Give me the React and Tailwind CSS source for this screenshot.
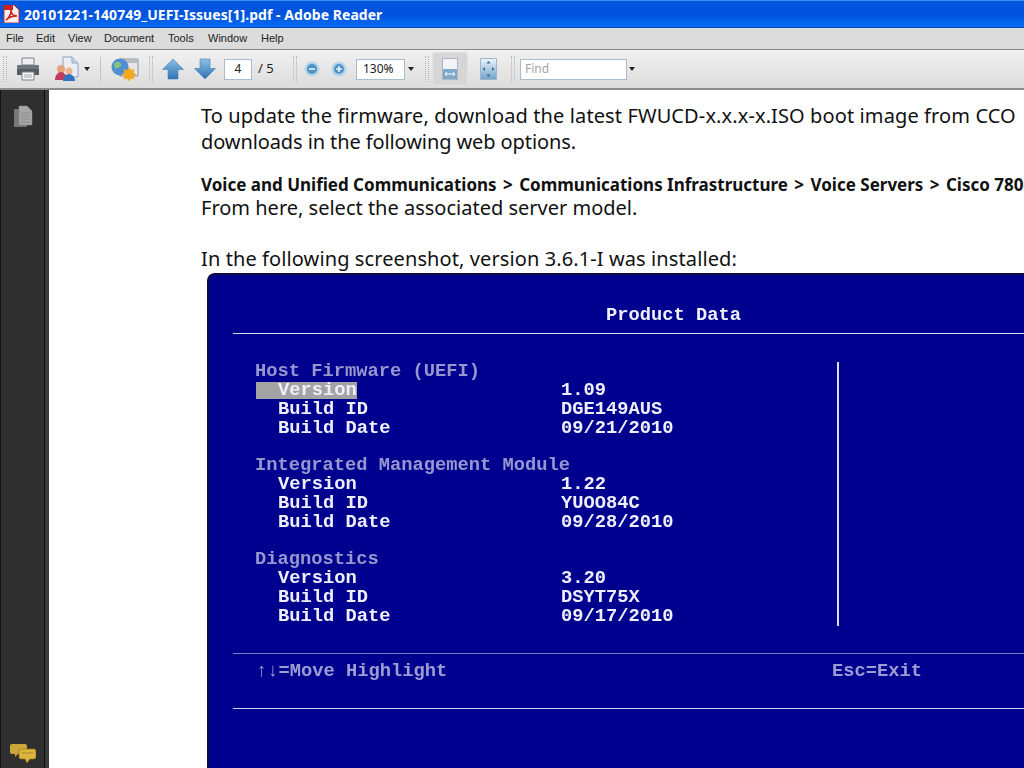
const MENU = [
  ["File", "w-[30px]"],
  ["Edit", "w-[32px]"],
  ["View", "w-[36px]"],
  ["Document", "w-[64px]"],
  ["Tools", "w-[40px]"],
  ["Window", "w-[53px]"],
  ["Help", "w-[30px]"],
];

const SECTIONS = [
  {
    title: "Host Firmware (UEFI)",
    rows: [
      ["Version", "1.09", true],
      ["Build ID", "DGE149AUS"],
      ["Build Date", "09/21/2010"],
    ],
  },
  {
    title: "Integrated Management Module",
    rows: [
      ["Version", "1.22"],
      ["Build ID", "YUOO84C"],
      ["Build Date", "09/28/2010"],
    ],
  },
  {
    title: "Diagnostics",
    rows: [
      ["Version", "3.20"],
      ["Build ID", "DSYT75X"],
      ["Build Date", "09/17/2010"],
    ],
  },
];

function Grip({ className = "" }) {
  return <div className={`w-[4px] h-[26px] border-x border-dotted border-[#b4b4b4] ${className}`}></div>;
}

function Caret({ className = "" }) {
  return (
    <svg className={className} width="6" height="4" viewBox="0 0 6 4">
      <path d="M0 0h6L3 4z" fill="#222" />
    </svg>
  );
}

function PdfIcon() {
  return (
    <svg width="17" height="18" viewBox="0 0 17 18" className="shrink-0">
      <path d="M1 0h10l5 5v13H1z" fill="#f6eeee" stroke="#c9302c" />
      <path d="M1 0h9v5H1z" fill="#c8231f" />
      <path d="M3 15c3-2 5-6 5-10 0 4 2 6 6 6-4 0-8 1-11 4z" fill="none" stroke="#d0201c" strokeWidth="1.6" />
    </svg>
  );
}

function PrinterIcon() {
  return (
    <svg width="24" height="24" viewBox="0 0 24 24">
      <path d="M6 1h12v7H6z" fill="#eef0f2" stroke="#7c8288" />
      <path d="M2 8h20a1 1 0 0 1 1 1v9H1V9a1 1 0 0 1 1-1z" fill="#6f767c" />
      <path d="M1 12h22v6H1z" fill="#555b61" />
      <path d="M6 15h12v8H6z" fill="#f4f5f6" stroke="#7c8288" />
      <path d="M8 18h8M8 20h8" stroke="#a5aaae" />
    </svg>
  );
}

function SharedDocIcon() {
  return (
    <svg width="24" height="26" viewBox="0 0 24 26">
      <path d="M8 1h9l6 6v14H8z" fill="#e9eef4" stroke="#8ea3bb" />
      <path d="M17 1v6h6" fill="#c7d6e6" stroke="#8ea3bb" />
      <circle cx="6" cy="13" r="4" fill="#e8a37a" />
      <path d="M0 24c0-5 3-8 6-8s6 3 6 8z" fill="#c23a5c" />
      <circle cx="14" cy="15" r="3.6" fill="#eeb48a" />
      <path d="M8 25c0-4 3-7 6-7s6 3 6 7z" fill="#2f74c0" />
    </svg>
  );
}

function GlobeIcon() {
  return (
    <svg width="28" height="27" viewBox="0 0 28 27">
      <path d="M9 3h18v17H9z" fill="#e6e7e8" stroke="#8e9296" />
      <path d="M9 3h18v4H9z" fill="#b9bcc0" />
      <circle cx="9" cy="11" r="8.5" fill="#4f8fd2" />
      <path d="M3 8c3-3 6-2 7 0s-2 4-4 4-3 2-1 4" fill="#8cc47d" />
      <path d="M18 11l2 3 3.500-1-1 3.500 3 2-3 1.500 1 3.500-3.500-1-2 3-2-3-3.500 1 1-3.500-3-1.500 3-2-1-3.500 3.500 1z" fill="#f2a91c" />
    </svg>
  );
}

function ArrowIcon({ down = false }) {
  return (
    <svg width="22" height="22" viewBox="0 0 22 22" className={down ? "rotate-180" : ""}>
      <defs>
        <linearGradient id={down ? "arrowD" : "arrowU"} x1="0" y1={down ? "1" : "0"} x2="0" y2={down ? "0" : "1"}>
          <stop offset="0" stopColor="#8cc0e8" />
          <stop offset="1" stopColor="#2f74b4" />
        </linearGradient>
      </defs>
      <path d="M11 1l10.500 10.500H16V21H6v-9.500H.5z" fill={`url(#${down ? "arrowD" : "arrowU"})`} stroke="#3f7fb5" strokeWidth=".6" />
    </svg>
  );
}

function ZoomIcon({ plus = false }) {
  return (
    <svg width="16" height="16" viewBox="0 0 16 16">
      <circle cx="8" cy="8" r="7.500" fill="#b6d3e8" />
      <circle cx="8" cy="8" r="5" fill="#4d93c8" />
      <path d={plus ? "M5 8h6M8 5v6" : "M5 8h6"} stroke="#eaf3fa" strokeWidth="1.600" />
    </svg>
  );
}

function FitWidthIcon() {
  return (
    <svg width="16" height="22" viewBox="0 0 16 22">
      <path d="M.5.5h15v21H.5z" fill="#f2f4f6" stroke="#a9b7c5" />
      <path d="M1 11h14v10H1z" fill="#7fa9cc" />
      <path d="M3 16h10M3 16l2-2M3 16l2 2M13 16l-2-2M13 16l-2 2" stroke="#fff" fill="none" />
    </svg>
  );
}

function FitPageIcon() {
  return (
    <svg width="17" height="22" viewBox="0 0 17 22">
      <defs>
        <linearGradient id="fitPage" x1="0" y1="0" x2="0" y2="1">
          <stop offset="0" stopColor="#eef5fa" />
          <stop offset="1" stopColor="#6fa3cb" />
        </linearGradient>
      </defs>
      <path d="M.5.5h16v21H.5z" fill="url(#fitPage)" stroke="#9fb5c8" />
      <path d="M8.500 3l2 2.500h-4zM8.500 19l2-2.500h-4zM2.500 11l2.500-2v4zM14.500 11l-2.500-2v4z" fill="#2f6f9f" />
    </svg>
  );
}

function PagesIcon() {
  return (
    <svg width="20" height="23" viewBox="0 0 20 23">
      <path d="M1 4h13v18H1z" fill="#777" />
      <path d="M6 1h8l5 5v14H6z" fill="#a6a6a6" stroke="#8a8a8a" strokeWidth=".5" />
      <path d="M8 8h9M8 11h9M8 14h9M8 17h9" stroke="#8c8c8c" />
    </svg>
  );
}

function CommentsIcon() {
  return (
    <svg width="26" height="20" viewBox="0 0 26 20">
      <path d="M2 1h13a2 2 0 0 1 2 2v6a2 2 0 0 1-2 2H8l-3 3v-3H2a2 2 0 0 1-2-2V3a2 2 0 0 1 2-2z" fill="#c9a53a" />
      <path d="M11 6h13a2 2 0 0 1 2 2v6a2 2 0 0 1-2 2h-4l-3 4-2-4h-4a2 2 0 0 1-2-2V8a2 2 0 0 1 2-2z" fill="#dcb43c" stroke="#8f7420" strokeWidth=".6" />
      <path d="M12 10h11" stroke="#a98a2a" />
    </svg>
  );
}

function Field({ className = "", children }) {
  return (
    <div className={`h-[21px] border border-[#a9bccd] bg-white flex items-center text-[12px] shrink-0 ${className}`}>
      {children}
    </div>
  );
}

function Toolbar() {
  return (
    <div className="h-[38px] bg-gradient-to-b from-[#f1f1f1] to-[#dcdcdc] flex items-center whitespace-nowrap text-[#222]">
      <Grip className="ml-[3px]" />
      <div className="ml-[9px] flex"><PrinterIcon /></div>
      <div className="ml-[15px] flex"><SharedDocIcon /></div>
      <Caret className="ml-[5px]" />
      <div className="ml-[10px] w-px h-[24px] bg-[#c4c4c4]"></div>
      <div className="ml-[10px] flex"><GlobeIcon /></div>
      <Grip className="ml-[10px]" />
      <div className="ml-[9px] flex"><ArrowIcon /></div>
      <div className="ml-[10px] flex"><ArrowIcon down /></div>
      <Field className="ml-[8px] w-[28px] justify-center">4</Field>
      <span className="ml-[6px] w-[20px] text-[13px]">/ 5</span>
      <Grip className="ml-[15px]" />
      <div className="ml-[7px] flex"><ZoomIcon /></div>
      <div className="ml-[11px] flex"><ZoomIcon plus /></div>
      <Field className="ml-[9px] w-[49px] pl-[6px]">130%</Field>
      <Caret className="ml-[3px]" />
      <Grip className="ml-[11px]" />
      <div className="ml-[3px] w-[36px] h-[34px] rounded-[3px] bg-[#d6d6d6] border border-[#e2e2e2] flex items-center justify-center">
        <FitWidthIcon />
      </div>
      <div className="ml-[12px] flex"><FitPageIcon /></div>
      <Grip className="ml-[14px]" />
      <Field className="ml-[5px] w-[107px] pl-[4px] text-[#a5a5a5]">Find</Field>
      <Caret className="ml-[2px]" />
    </div>
  );
}

function Rule({ className = "" }) {
  return <div className={`h-px ml-[24px] ${className}`}></div>;
}

function BiosRow({ row }) {
  const [label, value, active] = row;
  return (
    <div className="h-[18.8px] grid grid-cols-[352px_1fr] items-center">
      <div className="pl-[47px]">
        <span className={`inline-block w-[101px] pl-[22px] ${active ? "bg-[#a3a3a3]" : ""}`}>{label}</span>
      </div>
      <div>{value}</div>
    </div>
  );
}

function BiosScreen() {
  return (
    <div className="ml-[158px] mt-[1px] flex-1 overflow-hidden border-l-2 border-t-2 border-[#0b0b40] rounded-tl-[8px] bg-[#00008f] font-['Liberation_Mono',monospace] font-bold text-[18.750px] leading-[17px] text-[#eeeefc] whitespace-nowrap blur-[0.4px]">
      <div className="mt-[31px] ml-[397px] h-[19px] leading-[19px]">Product Data</div>
      <Rule className="mt-[8px] bg-[#d8d8f2]" />
      <div className="mt-[28.400px] flex">
        <div className="w-[628px] shrink-0">
          {SECTIONS.map((section) => (
            <div key={section.title} className="mb-[18.8px] last:mb-0">
              <div className="h-[18.8px] pl-[46px] text-[#9797cf] flex items-center">{section.title}</div>
              {section.rows.map((row) => (
                <BiosRow key={row[0]} row={row} />
              ))}
            </div>
          ))}
        </div>
        <div className="w-[2px] bg-[#dcdcf6]"></div>
      </div>
      <Rule className="mt-[27.600px] bg-[#7c7cc4]" />
      <div className="mt-[8px] h-[19px] leading-[19px] flex text-[#9d9dd4]">
        <div className="w-[623px] pl-[47px] shrink-0">↑↓=Move Highlight</div>
        <div>Esc=Exit</div>
      </div>
      <Rule className="mt-[27px] bg-[#d8d8f2]" />
    </div>
  );
}

function Crumb() {
  return <span className="mx-[2px]">&gt;</span>;
}

function PageText() {
  return (
    <div className="pl-[152px] text-[#111] text-[20px] whitespace-nowrap">
      <div className="pt-[13px] h-[39px] leading-[26px] tracking-[0.11px]">
        To update the firmware, download the latest FWUCD-x.x.x-x.ISO boot image from CCO
      </div>
      <div className="h-[26px] leading-[26px] tracking-[-0.1px]">downloads in the following web options.</div>
      <div className="mt-[19px] h-[22px] leading-[22px] font-bold text-[17px]">
        Voice and Unified Communications <Crumb /> Communications Infrastructure <Crumb /> Voice Servers <Crumb /> Cisco 7800 Series
      </div>
      <div className="h-[23px] leading-[23px]">From here, select the associated server model.</div>
      <div className="mt-[27px] h-[26px] leading-[26px] tracking-[0.1px]">In the following screenshot, version 3.6.1-I was installed:</div>
    </div>
  );
}

export default function App() {
  return (
    <div className="w-[1024px] h-[768px] overflow-hidden flex flex-col font-['Noto_Sans',sans-serif]">
      <div className="h-[28px] shrink-0 bg-gradient-to-b from-[#0058e0] via-[#0052dc] to-[#0a6cf5] border-t border-[#3f8cf0] border-b border-b-[#0a48b8] flex items-center pl-[3px] gap-[4px] text-white font-bold text-[14px] tracking-[0.05px] whitespace-nowrap">
        <PdfIcon />
        <span>20101221-140749_UEFI-Issues[1].pdf - Adobe Reader</span>
      </div>
      <div className="h-[21px] shrink-0 bg-[#dcdcdc] flex items-center pl-[6px] font-['Liberation_Sans',sans-serif] text-[11px] text-[#222] whitespace-nowrap">
        {MENU.map(([name, width]) => (
          <span key={name} className={width}>{name}</span>
        ))}
      </div>
      <div className="shrink-0 border-t border-[#8a8a8a] border-b-2 border-b-[#8c8c8c]">
        <Toolbar />
      </div>
      <div className="flex-1 min-h-0 flex">
        <div className="w-[45px] shrink-0 border-l border-[#111] border-r border-r-[#0c0c0c] bg-[#2f2f2f] flex flex-col items-center justify-between pt-[15px] pb-[5px]">
          <PagesIcon />
          <CommentsIcon />
        </div>
        <div className="w-[4px] shrink-0 bg-[#3a3a3a]"></div>
        <div className="flex-1 min-w-0 bg-white flex flex-col overflow-hidden">
          <PageText />
          <BiosScreen />
        </div>
      </div>
    </div>
  );
}
